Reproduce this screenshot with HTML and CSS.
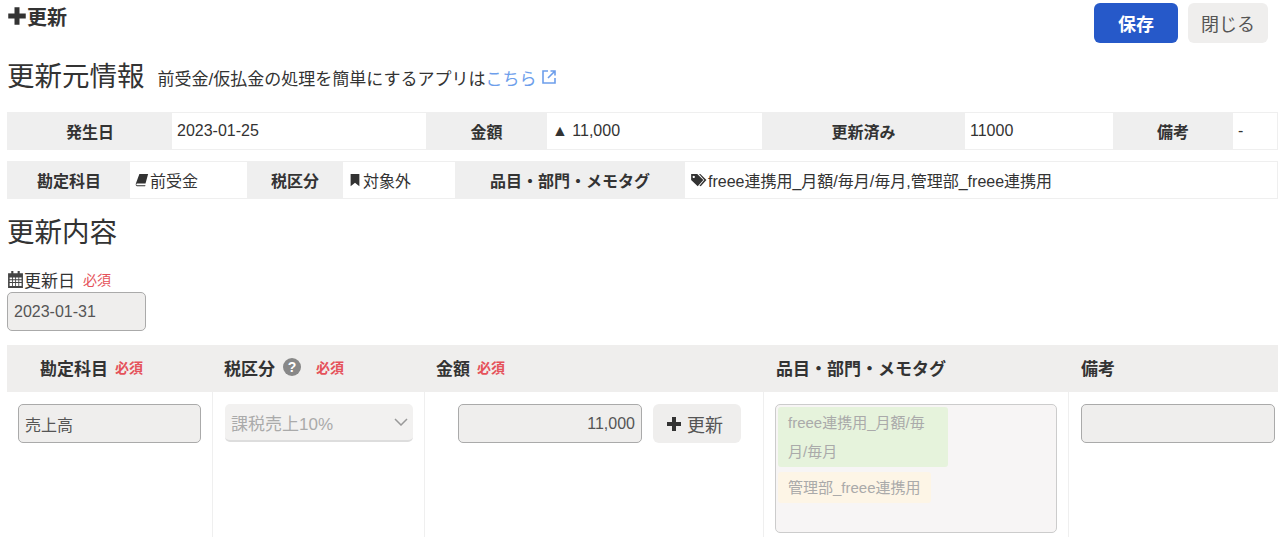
FILE: index.html
```html
<!DOCTYPE html>
<html lang="ja">
<head>
  <meta charset="UTF-8">
  <title>更新</title>
  <link rel="stylesheet" href="styles.css">
</head>
<body>
  <div class="top-bar">
    <div class="page-title">
      <svg class="icon-plus" viewBox="0 0 16 16"><path d="M6 1h4v5h5v4h-5v5H6v-5H1V6h5z"/></svg>更新
    </div>
    <div class="top-buttons">
      <button class="button button-save">保存</button>
      <button class="button button-close">閉じる</button>
    </div>
  </div>

  <div class="section-head">
    <h2>更新元情報</h2>
    <span class="section-note">前受金/仮払金の処理を簡単にするアプリは<a href="#">こちら</a><svg class="icon-link" viewBox="0 0 16 16"><path d="M7 2H2v12h12V9M9.500 2H14v4.500M14 2L7 9"/></svg></span>
  </div>

  <div class="info-row info-row-1">
    <div class="info-th">発生日</div>
    <div class="info-td">2023-01-25</div>
    <div class="info-th">金額</div>
    <div class="info-td">▲ 11,000</div>
    <div class="info-th">更新済み</div>
    <div class="info-td">11000</div>
    <div class="info-th">備考</div>
    <div class="info-td">-</div>
  </div>

  <div class="info-row info-row-2">
    <div class="info-th">勘定科目</div>
    <div class="info-td tight">
      <svg class="icon-small" viewBox="0 0 16 16"><path d="M5 1h10l-3 11H2.500a1 1 0 0 0 0 2H12l-.5 1H2.500C1 15 .5 13.500 1 12z"/></svg>前受金
    </div>
    <div class="info-th">税区分</div>
    <div class="info-td tight">
      <svg class="icon-small" viewBox="0 0 16 16"><path d="M3 1h10v14l-5-4-5 4z"/></svg>対象外
    </div>
    <div class="info-th">品目・部門・メモタグ</div>
    <div class="info-td">
      <svg class="icon-tag" viewBox="0 0 20 16"><path d="M1 1h7l7 7-6.500 7L1 8zM4 3.200a1.300 1.300 0 1 0 .01 0zM10 1h1.500l7 7-6.500 7-1.500-.500L16 8z" fill-rule="evenodd"/></svg>freee連携用_月額/毎月/毎月,管理部_freee連携用
    </div>
  </div>

  <h2 class="content-title">更新内容</h2>

  <div class="date-label">
    <svg class="icon-calendar" viewBox="0 0 16 16"><path d="M4 0h2v2h4V0h2v2h3v14H1V2h3zM2.500 6v1.800h2.200V6zm3 0v1.800h2.200V6zm3 0v1.800h2.200V6zm3 0v1.800h2.200V6zm-9 2.600v1.800h2.200V8.600zm3 0v1.800h2.200V8.600zm3 0v1.800h2.200V8.600zm3 0v1.800h2.200V8.600zm-9 2.600V14h2.200v-2.800zm3 0V14h2.200v-2.800zm3 0V14h2.200v-2.800zm3 0V14h2.200v-2.800z" fill-rule="evenodd"/></svg>更新日<span class="required">必須</span>
  </div>
  <div class="field date-field">2023-01-31</div>

  <div class="detail">
    <div class="detail-head col-account">勘定科目<span class="required">必須</span></div>
    <div class="detail-head col-tax">税区分<svg class="icon-help" viewBox="0 0 18 18"><circle cx="9" cy="9" r="9"/><text x="9" y="13.500" text-anchor="middle">?</text></svg><span class="required">必須</span></div>
    <div class="detail-head col-amount">金額<span class="required">必須</span></div>
    <div class="detail-head col-tags">品目・部門・メモタグ</div>
    <div class="detail-head col-note">備考</div>

    <div class="detail-cell cell-account"><div class="field">売上高</div></div>
    <div class="detail-cell cell-tax">
      <div class="select-box">課税売上10%<svg class="icon-chevron" viewBox="0 0 14 8"><path d="M1 1l6 6 6-6"/></svg></div>
    </div>
    <div class="detail-cell cell-amount">
      <div class="field amount-field">11,000</div>
      <button class="button button-add"><svg class="icon-plus-sm" viewBox="0 0 16 16"><path d="M6 1h4v5h5v4h-5v5H6v-5H1V6h5z"/></svg>更新</button>
    </div>
    <div class="detail-cell cell-tags">
      <div class="tag-box">
        <div class="tag tag-green">freee連携用_月額/毎月/毎月</div>
        <div class="tag tag-yellow">管理部_freee連携用</div>
      </div>
    </div>
    <div class="detail-cell cell-note"><div class="field"></div></div>
  </div>
</body>
</html>
```

FILE: styles.css
```css
* {
  box-sizing: border-box;
}

html, body {
  height: 538px;
  overflow: hidden;
}

body {
  margin: 0;
  padding: 0 2px 0 7px;
  background-color: #fff;
  color: #333;
  font-family: "Liberation Sans", "Noto Sans CJK JP", sans-serif;
  font-size: 16px;
}

.top-bar {
  display: flex;
  justify-content: space-between;
  align-items: flex-start;
  height: 43px;
  padding: 3px 10px 0 0;
}

.page-title {
  display: flex;
  align-items: center;
  font-size: 20px;
  font-weight: bold;
  height: 26px;
}

.icon-plus {
  width: 20px;
  height: 20px;
  fill: #333;
}

.top-buttons {
  display: flex;
  gap: 10px;
}

.button {
  border: none;
  border-radius: 6px;
  font-family: inherit;
  font-size: 18px;
  cursor: pointer;
}

.button-save {
  width: 84px;
  height: 40px;
  background-color: #2659c9;
  color: #fff;
  font-weight: bold;
}

.button-close {
  width: 80px;
  height: 40px;
  background-color: #efeeed;
  color: #555;
}

.section-head {
  display: flex;
  align-items: center;
  gap: 13px;
  height: 28px;
  margin-top: 20px;
}

h2 {
  margin: 0;
  font-size: 27.500px;
  font-weight: normal;
  line-height: 28px;
}

.section-note {
  display: flex;
  align-items: center;
  font-size: 17px;
}

.section-note a {
  color: #6d9eeb;
  text-decoration: none;
}

.icon-link {
  width: 16px;
  height: 16px;
  margin-left: 5px;
  fill: none;
  stroke: #6d9eeb;
  stroke-width: 1.600;
}

.info-row {
  display: grid;
  height: 38px;
  border: 1px solid #efefef;
  font-size: 16px;
}

.info-row-1 {
  grid-template-columns: 164px 254px 121px 215px 203px 148px 120px 1fr;
  margin-top: 21px;
}

.info-row-2 {
  grid-template-columns: 122px 117px 96px 112px 230px 1fr;
  margin-top: 11px;
}

.info-th {
  display: flex;
  align-items: center;
  justify-content: center;
  background-color: #efefef;
  font-weight: bold;
}

.info-td {
  display: flex;
  align-items: center;
  padding-left: 5px;
}

.icon-small {
  width: 14px;
  height: 14px;
  margin-right: 1px;
  fill: #333;
}

.icon-tag {
  width: 18px;
  height: 14px;
  fill: #333;
}

.content-title {
  margin-top: 20px;
}

.date-label {
  display: flex;
  align-items: center;
  height: 24px;
  margin-top: 20px;
  font-size: 17px;
}

.icon-calendar {
  width: 17px;
  height: 17px;
  fill: #444;
}

.required {
  margin-left: 8px;
  color: #e5525a;
  font-size: 14px;
}

.field {
  display: flex;
  align-items: center;
  height: 39px;
  padding: 0 6px;
  background-color: #efeeed;
  border: 1px solid #aaa;
  border-radius: 5px;
  color: #555;
  font-size: 16px;
}

.date-field {
  width: 139px;
  margin-top: 1px;
}

.detail {
  display: grid;
  grid-template-columns: 206px 212px 339px 305px 1fr;
  grid-template-rows: 47px 145px;
  margin-top: 14px;
}

.detail-head {
  display: flex;
  align-items: center;
  background-color: #efeeed;
  font-size: 17px;
  font-weight: bold;
  padding-bottom: 3px;
}

.detail-head .required {
  margin-left: 7px;
}

.col-account {
  padding-left: 33px;
}

.col-tax {
  padding-left: 11px;
}

.col-amount {
  padding-left: 11px;
}

.col-tags {
  padding-left: 12px;
}

.col-note {
  padding-left: 12px;
}

.icon-help {
  width: 18px;
  height: 18px;
  margin-left: 8px;
  margin-right: 8px;
  fill: #888;
}

.icon-help text {
  fill: #fff;
  font-size: 14px;
  font-weight: bold;
}

.detail-cell {
  padding-top: 12px;
  border-right: 1px solid #efefef;
}

.cell-account {
  padding-left: 11px;
  padding-right: 11px;
}

.cell-tax {
  padding-left: 12px;
  padding-right: 11px;
}

.select-box {
  display: flex;
  align-items: center;
  justify-content: space-between;
  height: 38px;
  padding: 0 5px 0 6px;
  background-color: #f2f1f0;
  border-bottom: 2px solid #ddd;
  border-radius: 5px;
  color: #aaa;
  font-size: 17px;
}

.icon-chevron {
  width: 14px;
  height: 8px;
  fill: none;
  stroke: #999;
  stroke-width: 1.500;
}

.cell-amount {
  display: flex;
  gap: 11px;
  padding-left: 33px;
  align-items: flex-start;
}

.amount-field {
  width: 184px;
  justify-content: flex-end;
}

.button-add {
  display: flex;
  align-items: center;
  gap: 5px;
  height: 39px;
  width: 88px;
  padding: 0 0 0 13px;
  background-color: #efeeed;
  color: #555;
}

.icon-plus-sm {
  width: 16px;
  height: 16px;
  fill: #333;
}

.cell-tags {
  padding-left: 11px;
  padding-right: 11px;
}

.tag-box {
  height: 129px;
  padding: 2px;
  background-color: #f7f5f5;
  border: 1px solid #ccc;
  border-radius: 5px;
}

.tag {
  width: fit-content;
  max-width: 170px;
  margin-bottom: 5px;
  padding: 1px 10px;
  border-radius: 3px;
  color: #aaa;
  font-size: 15px;
  line-height: 29px;
}

.tag-green {
  background-color: #e6f3dc;
}

.tag-yellow {
  background-color: #fdf5e6;
}

.cell-note {
  padding-left: 12px;
  padding-right: 3px;
  border-right: none;
}
```
